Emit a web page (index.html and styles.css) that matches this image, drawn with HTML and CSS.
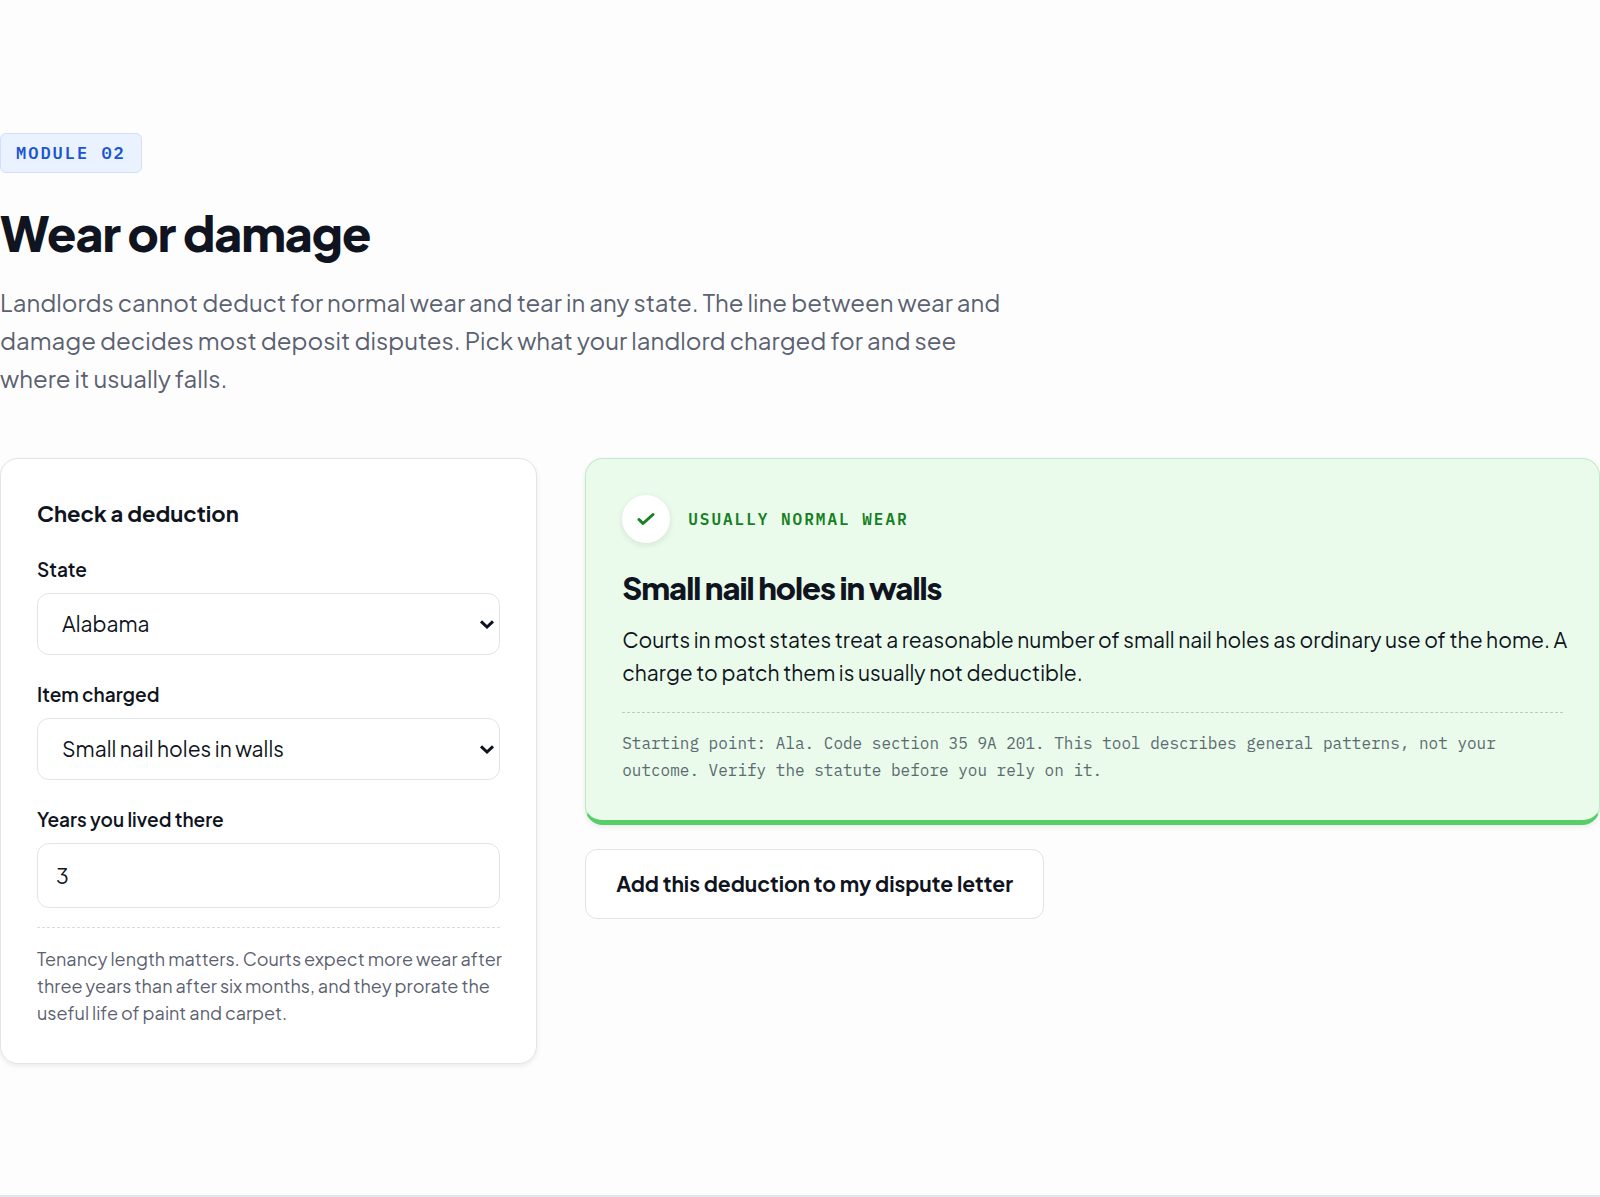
FILE: index.html
```html
<!DOCTYPE html>
<html lang="en">
<head>
<meta charset="utf-8">
<meta name="viewport" content="width=device-width, initial-scale=1">
<title>Wear or damage</title>
<link rel="stylesheet" href="styles.css">
</head>
<body>
<main class="module">
  <header class="intro">
    <span class="badge">MODULE 02</span>
    <h1 class="title">Wear or damage</h1>
    <p class="lead">Landlords cannot deduct for normal wear and tear in any state. The line between wear and damage decides most deposit disputes. Pick what your landlord charged for and see where it usually falls.</p>
  </header>
  <div class="columns">
    <form class="card">
      <h2 class="card-title">Check a deduction</h2>
      <div class="field">
        <label for="state">State</label>
        <div class="select">
          <select id="state"><option>Alabama</option></select>
          <svg class="chevron" viewBox="0 0 16 11" aria-hidden="true"><path d="M2 2.300L8 8l6-5.700"/></svg>
        </div>
      </div>
      <div class="field">
        <label for="item">Item charged</label>
        <div class="select">
          <select id="item"><option>Small nail holes in walls</option></select>
          <svg class="chevron" viewBox="0 0 16 11" aria-hidden="true"><path d="M2 2.300L8 8l6-5.700"/></svg>
        </div>
      </div>
      <div class="field">
        <label for="years">Years you lived there</label>
        <input id="years" type="text" inputmode="numeric" value="3">
      </div>
      <div class="hint">
        <p>Tenancy length matters. Courts expect more wear after three years than after six months, and they prorate the useful life of paint and carpet.</p>
      </div>
    </form>
    <div class="outcome">
      <section class="verdict">
        <div class="verdict-head">
          <span class="check"><svg viewBox="0 0 18 14" aria-hidden="true"><path d="M2 7.500l4 4L16 2.500"/></svg></span>
          <span class="verdict-label">USUALLY NORMAL WEAR</span>
        </div>
        <h2 class="verdict-title">Small nail holes in walls</h2>
        <p class="verdict-text">Courts in most states treat a reasonable number of small nail holes as ordinary use of the home. A charge to patch them is usually not deductible.</p>
        <p class="source">Starting point: Ala. Code section 35 9A 201. This tool describes general patterns, not your outcome. Verify the statute before you rely on it.</p>
      </section>
      <button class="add" type="button">Add this deduction to my dispute letter</button>
    </div>
  </div>
</main>
</body>
</html>
```
FILE: styles.css
```css
:root {
  --ink: #0f1420;
  --muted: #5b6170;
  --line: #e2e4e8;
  --sans: "Plus Jakarta Sans", Inter, "Liberation Sans", sans-serif;
  --mono: "IBM Plex Mono", "Liberation Mono", monospace;
}

* { box-sizing: border-box; }

body {
  margin: 0;
  background: #fdfdfd;
  color: var(--ink);
  font-family: var(--sans);
}

h1, h2, p { margin: 0; }

.module {
  padding: 133px 0 131px;
  border-bottom: 2px solid #e2e6ec;
}

.badge {
  display: inline-block;
  padding: 0 15px;
  border: 1px solid #cfdffd;
  border-radius: 6px;
  background: #eaf2ff;
  color: #1a56d0;
  font: 600 17px/38px var(--mono);
  letter-spacing: 2px;
  vertical-align: top;
}

.title {
  margin-top: 31px;
  font-size: 48px;
  font-weight: 800;
  line-height: 58px;
  letter-spacing: -1px;
}

.lead {
  max-width: 1010px;
  margin-top: 21px;
  color: var(--muted);
  font-size: 24px;
  line-height: 38px;
}

.columns {
  display: grid;
  grid-template-columns: 9fr 17fr;
  align-items: start;
  gap: 48px;
  margin-top: 61px;
}

.card {
  padding: 36px 36px 37px;
  border: 1px solid var(--line);
  border-radius: 18px;
  background: #fff;
  box-shadow: 0 2px 5px rgba(15, 20, 32, 0.08);
}

.card-title {
  margin-bottom: 22px;
  font-size: 22px;
  font-weight: 700;
  line-height: 36px;
}

.field {
  display: grid;
  gap: 8px;
}

.field + .field { margin-top: 23px; }

.field label {
  font-size: 19px;
  font-weight: 600;
  line-height: 32px;
}

.field select,
.field input {
  width: 100%;
  height: 62px;
  padding: 0 24px;
  border: 1px solid var(--line);
  border-radius: 12px;
  background: #fff;
  color: var(--ink);
  font: 400 21px/30px var(--sans);
}

.field input {
  height: 65px;
  padding: 0 18px;
}

.select {
  display: grid;
  align-items: center;
}

.select > * { grid-area: 1 / 1; }

.select select { appearance: none; }

.chevron {
  width: 16px;
  height: 11px;
  margin-right: 5px;
  justify-self: end;
  pointer-events: none;
}

.chevron path,
.check path {
  fill: none;
  stroke: var(--ink);
  stroke-width: 3;
}

.hint {
  margin-top: 19px;
  padding-top: 17px;
  border-top: 1px dashed #d9dce2;
  color: var(--muted);
  font-size: 18px;
  line-height: 27px;
}

.hint p,
.verdict-text { margin-right: -8px; }

.verdict {
  padding: 36px;
  border: 1px solid #bdecc4;
  border-bottom: 5px solid #55cf66;
  border-radius: 18px;
  background: #eafbeb;
  box-shadow: 0 2px 5px rgba(15, 20, 32, 0.08);
}

.verdict-head {
  display: flex;
  align-items: center;
  gap: 18px;
}

.check {
  display: grid;
  place-items: center;
  width: 48px;
  height: 48px;
  border-radius: 50%;
  background: #fff;
  box-shadow: 0 2px 6px rgba(15, 20, 32, 0.1);
}

.check svg {
  width: 18px;
  height: 14px;
}

.check path {
  stroke: #15801f;
  stroke-linecap: round;
  stroke-linejoin: round;
}

.verdict-label {
  color: #15801f;
  font: 600 16px/24px var(--mono);
  letter-spacing: 2px;
}

.verdict-title {
  margin-top: 25px;
  font-size: 31px;
  font-weight: 800;
  line-height: 40px;
  letter-spacing: -1px;
}

.verdict-text {
  margin-top: 15px;
  font-size: 21px;
  line-height: 33px;
}

.source {
  margin-top: 23px;
  padding-top: 17px;
  border-top: 1px dashed #b9cdbc;
  color: #5b6b70;
  font: 400 16px/27px var(--mono);
}

.add {
  height: 70px;
  margin-top: 24px;
  padding: 0 30px;
  border: 1px solid var(--line);
  border-radius: 12px;
  background: #fff;
  color: var(--ink);
  font: 700 21px/30px var(--sans);
}
```
